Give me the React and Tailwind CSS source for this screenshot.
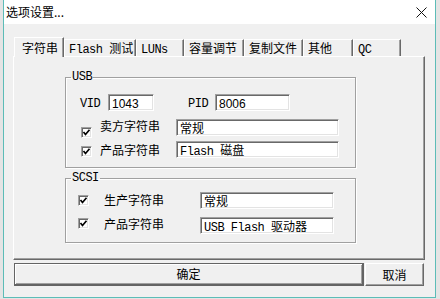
import React from 'react';

const mono = "font-['Liberation_Mono','Noto_Sans_CJK_SC',monospace]";
const cjk = "font-['Noto_Sans_CJK_SC','Liberation_Sans',sans-serif]";
const sunken = 'bg-white border border-t-[#a0a0a0] border-l-[#a0a0a0] border-b-white border-r-white shadow-[inset_1px_1px_0_#696969,inset_-1px_-1px_0_#e3e3e3]';
const groupBox = 'border border-[#a0a0a0] shadow-[inset_1px_1px_0_#fff,1px_1px_0_#fff]';

// latin parts in a tight mono, chinese parts in a 12px cjk face
function Mixed({ text }) {
  const parts = text.split(/([\u4e00-\u9fff]+)/).filter(Boolean);
  return parts.map((p, i) =>
    /[\u4e00-\u9fff]/.test(p) ? (
      <span key={i} className={`text-[12px] ${cjk}`}>{p}</span>
    ) : (
      <span key={i} className={`text-[12px] tracking-[-0.5px] ${mono}`}>{p}</span>
    )
  );
}

const tabs = [
  { label: '字符串', w: 'w-[50px]' },
  { label: 'Flash 测试', w: 'w-[72px]' },
  { label: 'LUNs', w: 'w-[48px]' },
  { label: '容量调节', w: 'w-[60px]' },
  { label: '复制文件', w: 'w-[59px]' },
  { label: '其他', w: 'w-[50px]' },
  { label: 'QC', w: 'w-[48px]' },
];

function Check({ className = '' }) {
  return (
    <div className={`w-[11px] h-[11px] shrink-0 flex items-center justify-center ${sunken} ${className}`}>
      <svg width="9" height="9" viewBox="0 0 9 9">
        <path d="M1.5 4 L3.5 6.5 L7.5 1.8" fill="none" stroke="#000" strokeWidth="1.7" />
      </svg>
    </div>
  );
}

function Field({ value, className = '', sans = false }) {
  return (
    <div className={`h-[17px] shrink-0 px-[3px] leading-[15px] text-black whitespace-nowrap overflow-hidden ${sunken} ${className}`}>
      {sans ? <span className="text-[12px] font-['Liberation_Sans',sans-serif]">{value}</span> : <Mixed text={value} />}
    </div>
  );
}

export default function App() {
  return (
    <div className="w-[440px] h-[299px] bg-[#e4e4e4] overflow-hidden">
      <div className="ml-[3px] w-[433px] h-[298px] border-x border-b border-[#5cbcb7] bg-[#f0f0f0] flex flex-col">
        {/* title bar */}
        <div className="h-[24px] shrink-0 bg-white flex items-center justify-between pl-[2px] pr-[8px]">
          <span className={`text-[12px] text-black ${cjk}`}>选项设置...</span>
          <svg width="11" height="11" viewBox="0 0 11 11">
            <path d="M0.5 0.5 L10.5 10.5 M10.5 0.5 L0.5 10.5" stroke="#111" strokeWidth="1" />
          </svg>
        </div>

        {/* body */}
        <div className="flex-1 pt-[13px] pl-[9px] pr-[10px]">
          {/* tab strip */}
          <div className="flex items-end h-[19px] ml-px">
            {tabs.map((t, i) =>
              i === 0 ? (
                <div
                  key={t.label}
                  className={`${t.w} h-[20px] -mb-px relative z-10 bg-[#f0f0f0] border-t border-l border-white border-r border-r-[#696969] shadow-[inset_-1px_0_0_#a0a0a0] pl-[7px] pt-[2px] leading-[15px] text-black`}
                >
                  <Mixed text={t.label} />
                </div>
              ) : (
                <div
                  key={t.label}
                  className={`${t.w} h-[17px] border-t border-l border-white border-r border-r-[#696969] shadow-[inset_-1px_0_0_#a0a0a0] pl-[4px] leading-[15px] text-black whitespace-nowrap overflow-hidden`}
                >
                  <Mixed text={t.label} />
                </div>
              )
            )}
          </div>

          {/* tab panel */}
          <div className="w-[412px] h-[204px] border-t border-l border-white border-r border-b border-r-[#696969] border-b-[#696969] shadow-[inset_-1px_-1px_0_#a0a0a0] pl-[51px] pt-[13px]">
            {/* USB */}
            <fieldset className={`w-[291px] pb-[9px] ${groupBox}`}>
              <legend className={`ml-[5px] px-[1px] text-[12px] tracking-[-0.5px] leading-[14px] text-black ${mono}`}>USB</legend>
              <div className="mt-[10px] h-[17px] flex items-end">
                <span className={`ml-[14px] w-[28px] text-[12px] tracking-[-0.5px] leading-[14px] text-black ${mono}`}>VID</span>
                <Field value="1043" className="w-[46px]" sans />
                <span className={`ml-[34px] w-[27px] text-[12px] tracking-[-0.5px] leading-[14px] text-black ${mono}`}>PID</span>
                <Field value="8006" className="w-[75px]" sans />
              </div>
              <div className="mt-[8px] h-[17px] flex items-start">
                <Check className="ml-[15px] mt-[8px]" />
                <span className={`ml-[8px] w-[60px] text-[12px] leading-[14px] text-black ${cjk}`}>卖方字符串</span>
                <Field value="常规" className="ml-[16px] w-[163px]" />
              </div>
              <div className="mt-[5px] h-[17px] flex items-start">
                <Check className="ml-[15px] mt-[5px]" />
                <span className={`ml-[8px] mt-[2px] w-[60px] text-[12px] leading-[14px] text-black ${cjk}`}>产品字符串</span>
                <Field value="Flash 磁盘" className="ml-[16px] w-[163px]" />
              </div>
            </fieldset>

            {/* SCSI */}
            <fieldset className={`mt-[3px] w-[291px] pb-[8px] ${groupBox}`}>
              <legend className={`ml-[5px] px-[1px] text-[12px] tracking-[-0.5px] leading-[14px] text-black ${mono}`}>SCSI</legend>
              <div className="mt-[7px] h-[17px] flex items-start">
                <Check className="ml-[12px] mt-[3px]" />
                <span className={`ml-[15px] mt-[1px] w-[60px] text-[12px] leading-[14px] text-black ${cjk}`}>生产字符串</span>
                <Field value="常规" className="ml-[36px] w-[134px]" />
              </div>
              <div className="mt-[8px] h-[17px] flex items-start">
                <Check className="ml-[12px] mt-[1px]" />
                <span className={`ml-[15px] w-[60px] text-[12px] leading-[14px] text-black ${cjk}`}>产品字符串</span>
                <Field value="USB Flash 驱动器" className="ml-[36px] w-[134px]" />
              </div>
            </fieldset>
          </div>

          {/* buttons */}
          <div className="mt-[3px] ml-px flex gap-[1px]">
            <button className={`w-[350px] h-[23px] border border-[#646464] border-b-2 border-r-2 bg-[#f0f0f0] shadow-[inset_1px_1px_0_#fff,inset_-1px_-1px_0_#a0a0a0] text-[12px] leading-[14px] text-black ${cjk}`}>
              确定
            </button>
            <button className={`w-[59px] h-[23px] border border-t-white border-l-white border-b-[#696969] border-r-[#696969] bg-[#f0f0f0] shadow-[inset_-1px_-1px_0_#a0a0a0] text-[12px] leading-[14px] text-black ${cjk}`}>
              取消
            </button>
          </div>
        </div>
      </div>
    </div>
  );
}
